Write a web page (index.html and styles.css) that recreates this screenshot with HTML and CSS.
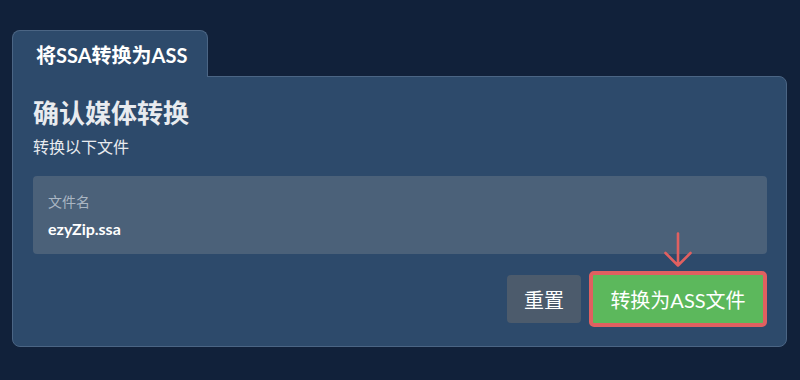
FILE: index.html
```html
<!DOCTYPE html>
<html lang="zh-CN">
<head>
    <meta charset="UTF-8">
    <title>将SSA转换为ASS</title>
    <link rel="stylesheet" href="styles.css">
</head>
<body>
<div class="tabs">
    <div class="tab">将SSA转换为ASS</div>
</div>
<div class="panel">
    <h2>确认媒体转换</h2>
    <p class="sub">转换以下文件</p>
    <div class="file-box">
        <div class="file-label">文件名</div>
        <div class="file-name">ezyZip.ssa</div>
    </div>
    <div class="actions">
        <button class="btn btn-reset">重置</button>
        <div class="convert-wrap">
            <svg class="arrow" viewBox="0 0 30 36" aria-hidden="true">
                <path d="M15 1.5v32M2.5 21l12.5 12.5 12.5-12.5" fill="none" stroke="#e06060" stroke-width="2.6" stroke-linecap="round" stroke-linejoin="round"/>
            </svg>
            <button class="btn btn-convert">转换为ASS文件</button>
        </div>
    </div>
</div>
</body>
</html>
```

FILE: styles.css
```css
body {
    font-family: Lato, "Noto Sans CJK SC", sans-serif;
    background-color: #11213a;
    color: #eef1f4;
    margin: 0;
    padding: 30px 13px 0 12px;
}

.tabs {
    display: flex;
}

.tab {
    width: 196px;
    box-sizing: border-box;
    height: 47px;
    padding: 11px 0 0 23px;
    background: #2d4a6b;
    border: 1px solid #4b6584;
    border-bottom: none;
    border-radius: 8px 8px 0 0;
    font-size: 20px;
    font-weight: bold;
    line-height: 26px;
    color: #fff;
    margin-bottom: -1px;
    position: relative;
    z-index: 1;
}

.panel {
    background: #2d4a6b;
    border: 1px solid #4b6584;
    border-radius: 0 8px 8px 8px;
    padding: 19px 19px 19px 20px;
}

.panel h2 {
    margin: 0;
    font-size: 26px;
    line-height: 34px;
    font-weight: bold;
    color: #e8ebef;
}

.sub {
    margin: 6px 0 0;
    font-size: 16px;
    line-height: 22px;
    color: #e8ebef;
}

.file-box {
    margin-top: 18px;
    background: #4b6179;
    border-radius: 4px;
    height: 78px;
    box-sizing: border-box;
    padding: 16px 15px;
}

.file-label {
    font-size: 14px;
    line-height: 20px;
    color: #aab6c3;
}

.file-name {
    margin-top: 6px;
    font-size: 16px;
    line-height: 22px;
    font-weight: bold;
    color: #fff;
}

.actions {
    display: flex;
    justify-content: flex-end;
    align-items: center;
    gap: 8px;
    margin-top: 17px;
}

.btn {
    font-family: Lato, "Noto Sans CJK SC", sans-serif;
    font-size: 20px;
    color: #fff;
    border: none;
    border-radius: 4px;
    cursor: pointer;
    padding: 0;
}

.btn-reset {
    width: 74px;
    height: 48px;
    background: #4c5b6c;
}

.convert-wrap {
    position: relative;
}

.btn-convert {
    display: block;
    width: 178px;
    height: 56px;
    background: #5cb85c;
    border: 4px solid #e06060;
    border-radius: 5px;
}

.arrow {
    position: absolute;
    left: 74px;
    top: -39px;
    width: 30px;
    height: 36px;
}
```
